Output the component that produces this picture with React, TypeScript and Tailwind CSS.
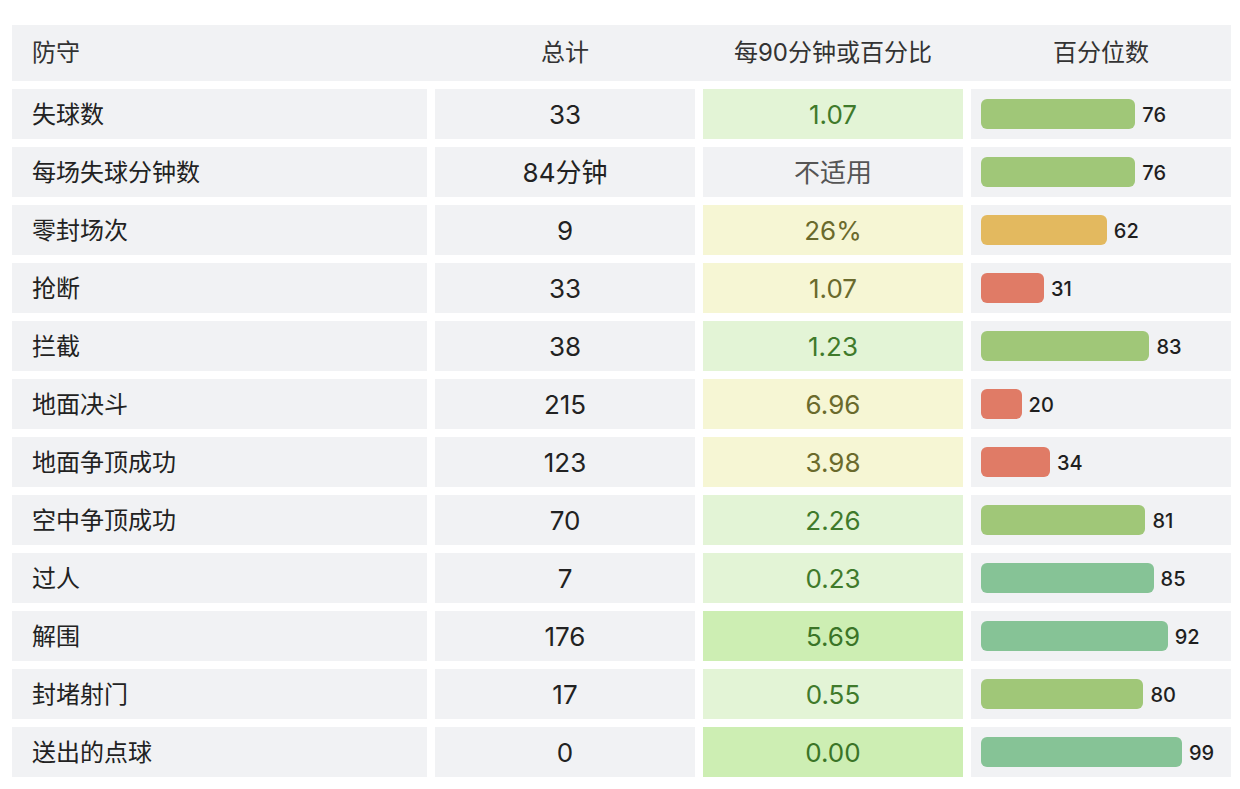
const rows = [
  { name: "失球数", total: "33", per90: "1.07", tone: "light", pct: 76, bar: "lime" },
  { name: "每场失球分钟数", total: "84分钟", per90: "不适用", tone: "none", pct: 76, bar: "lime" },
  { name: "零封场次", total: "9", per90: "26%", tone: "yellow", pct: 62, bar: "orange" },
  { name: "抢断", total: "33", per90: "1.07", tone: "yellow", pct: 31, bar: "red" },
  { name: "拦截", total: "38", per90: "1.23", tone: "light", pct: 83, bar: "lime" },
  { name: "地面决斗", total: "215", per90: "6.96", tone: "yellow", pct: 20, bar: "red" },
  { name: "地面争顶成功", total: "123", per90: "3.98", tone: "yellow", pct: 34, bar: "red" },
  { name: "空中争顶成功", total: "70", per90: "2.26", tone: "light", pct: 81, bar: "lime" },
  { name: "过人", total: "7", per90: "0.23", tone: "light", pct: 85, bar: "teal" },
  { name: "解围", total: "176", per90: "5.69", tone: "strong", pct: 92, bar: "teal" },
  { name: "封堵射门", total: "17", per90: "0.55", tone: "light", pct: 80, bar: "lime" },
  { name: "送出的点球", total: "0", per90: "0.00", tone: "strong", pct: 99, bar: "teal" },
];

const toneClass: Record<string, string> = {
  light: "bg-[#e3f4d6] text-[#3f7a2b]",
  strong: "bg-[#cdeeb3] text-[#3a7427]",
  yellow: "bg-[#f6f6d4] text-[#6a6a2c]",
  none: "bg-[#f1f2f4] text-[#555]",
};

const barClass: Record<string, string> = {
  lime: "bg-[#a0c778]",
  orange: "bg-[#e3b95f]",
  red: "bg-[#e07b66]",
  teal: "bg-[#86c396]",
};

export default function App() {
  return (
    <div
      className="w-[1240px] h-[789px] bg-white pt-[25px] pl-[12px] text-[#222]"
      style={{ fontFamily: 'Inter, "Noto Sans CJK SC", sans-serif' }}
    >
      {/* header band */}
      <div className="grid grid-cols-[415px_260px_260px_260px] gap-x-[8px] w-[1219px] h-[56px] bg-[#f1f2f4] items-center text-[24px] text-[#333]">
        <div className="pl-[20px]">防守</div>
        <div className="text-center">总计</div>
        <div className="text-center">每90分钟或百分比</div>
        <div className="text-center">百分位数</div>
      </div>

      <div className="mt-[8px] flex flex-col gap-[8px]">
        {rows.map((r) => (
          <div key={r.name} className="grid grid-cols-[415px_260px_260px_260px] gap-x-[8px] h-[50px]">
            <div className="bg-[#f1f2f4] flex items-center pl-[20px] pt-[1px] text-[24px]">{r.name}</div>
            <div className="bg-[#f1f2f4] flex items-center justify-center pt-[1px] text-[26px]">{r.total}</div>
            <div className={`flex items-center justify-center pt-[1px] text-[26px] ${toneClass[r.tone]}`}>{r.per90}</div>
            <div className="bg-[#f1f2f4] flex items-center pl-[10px] gap-[7px]">
              <div className={`h-[30px] rounded-[6px] ${barClass[r.bar]}`} style={{ width: `${r.pct * 2.03}px` }} />
              <span className="text-[20px] font-medium text-[#1f1f1f] pt-[1px]">{r.pct}</span>
            </div>
          </div>
        ))}
      </div>
    </div>
  );
}
